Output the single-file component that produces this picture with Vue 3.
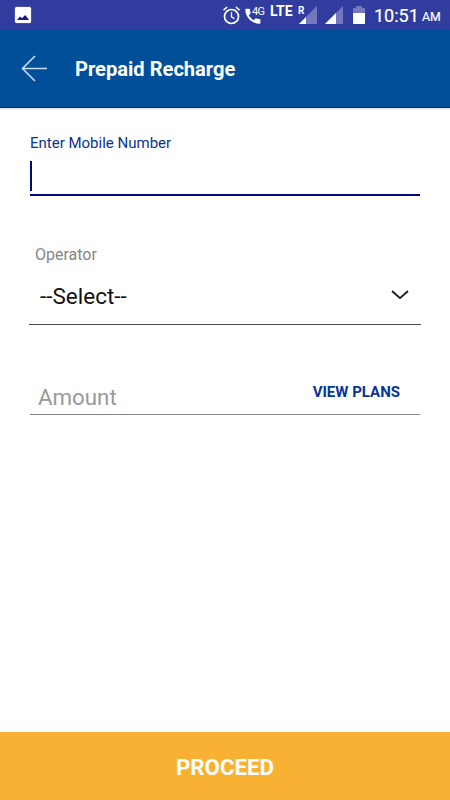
<script setup>
import { ref } from 'vue'

const operator = ref('--Select--')
const time = ref('10:51')
</script>

<template>
  <div class="screen">
    <div class="status">
      <svg class="photo" width="18" height="18" viewBox="0 0 18 18">
        <rect x="0.5" y="0.5" width="17" height="17" rx="2" fill="#fff" stroke="#17148b" stroke-width="0.6" />
        <path d="M3 14L6 10.4L8 12.3L11.2 9L15 14Z" fill="#17148b" />
      </svg>
      <div class="indicators">
        <svg class="alarm" width="18" height="19" viewBox="0 0 18 19" fill="none" stroke="#fff">
          <circle cx="8.5" cy="10.5" r="7" stroke-width="1.7" />
          <path d="M8.5 6.2V10.8L11.5 12.8" stroke-width="1.3" />
          <path d="M.5 4.1L4.2 1M16.5 4.1L12.8 1" stroke-width="1.6" />
        </svg>
        <div class="call">
          <svg width="16" height="16" viewBox="0 0 16 16">
            <path d="M1 .7H4.2C4.8 .7 5 1 5 1.5C5 2.7 5.2 3.8 5.6 4.8C5.7 5.1 5.6 5.4 5.4 5.7L3.8 7.2C5 9.3 6.7 11 8.8 12.2L10.4 10.6C10.7 10.3 11 10.3 11.3 10.4C12.3 10.7 13.4 10.9 14.6 10.9C15 10.9 15.4 11.2 15.4 11.7V15C15.4 15.4 15 15.8 14.6 15.8C6.9 15.8 .3 9.2 .3 1.5C.3 1 .6 .7 1 .7Z" fill="#fff" />
          </svg>
          <span class="generation">4G</span>
        </div>
        <span class="lte">LTE</span>
        <div class="signal roaming">
          <svg width="18" height="18" viewBox="0 0 18 18">
            <path d="M0 18L18 0V18Z" fill="#7477bd" />
            <path d="M0 18L7 11V18Z" fill="#fff" />
          </svg>
          <span class="roam">R</span>
        </div>
        <svg class="signal" width="18" height="18" viewBox="0 0 18 18">
          <path d="M0 18L18 0V18Z" fill="#7477bd" />
          <path d="M0 18L11 7V18Z" fill="#fff" />
        </svg>
        <svg class="battery" width="12" height="18" viewBox="0 0 12 18">
          <path d="M0 2H3V0H9V2H12V7H0Z" fill="#7477bd" />
          <path d="M0 7H12V17.2Q12 18 11.2 18H.8Q0 18 0 17.2Z" fill="#fff" />
        </svg>
        <span class="time">{{ time }}</span>
        <span class="meridiem">AM</span>
      </div>
    </div>

    <header class="bar">
      <svg width="28" height="28" viewBox="0 0 28 28" fill="none" stroke="#c9dcf0" stroke-width="1.6">
        <path d="M26 13.5H1.5M14 1L1.5 13.5L14 26" />
      </svg>
      <h1>Prepaid Recharge</h1>
    </header>

    <main class="form">
      <section class="mobile">
        <label>Enter Mobile Number</label>
        <div class="entry"><i class="caret"></i></div>
      </section>

      <section class="operator">
        <label>Operator</label>
        <div class="select">
          <span>{{ operator }}</span>
          <svg width="18" height="10" viewBox="0 0 18 10" fill="none" stroke="#111" stroke-width="1.7">
            <path d="M1 1L9 8.2L17 1" />
          </svg>
        </div>
      </section>

      <section class="amount">
        <span class="placeholder">Amount</span>
        <span class="plans">VIEW PLANS</span>
      </section>
    </main>

    <footer class="proceed">PROCEED</footer>
  </div>
</template>

<style>
body {
  margin: 0;
}
</style>

<style scoped>
.screen {
  width: 450px;
  height: 800px;
  display: flex;
  flex-direction: column;
  overflow: hidden;
  background: #fff;
  font-family: Roboto, sans-serif;
}
svg {
  display: block;
  flex: none;
}
.status {
  height: 30px;
  box-sizing: border-box;
  padding: 6px 9px 0 14px;
  display: flex;
  justify-content: space-between;
  background: #303c9e;
  color: #fff;
}
.indicators {
  width: 218px;
  display: flex;
  align-items: flex-start;
  white-space: nowrap;
}
.call {
  position: relative;
  width: 20px;
  margin-left: 4px;
  padding-top: 2px;
}
.generation {
  position: absolute;
  left: 7px;
  top: 0;
  font-size: 11px;
  line-height: 11px;
  letter-spacing: -0.7px;
}
.lte {
  width: 24px;
  margin-left: 5px;
  font-size: 14px;
  line-height: 11px;
  font-weight: 700;
}
.signal {
  margin-left: 8px;
}
.signal.roaming {
  position: relative;
  margin-left: 5px;
}
.roam {
  position: absolute;
  left: -1px;
  top: 0;
  font-size: 10px;
  line-height: 10px;
  font-weight: 700;
}
.battery {
  margin-left: 10px;
}
.time {
  width: 46px;
  margin-left: 9px;
  font-size: 18px;
  line-height: 20px;
  -webkit-text-stroke: 0.2px #fff;
}
.meridiem {
  margin-left: 2px;
  font-size: 12.3px;
  line-height: 23px;
  -webkit-text-stroke: 0.2px #fff;
}
.bar {
  height: 78px;
  box-sizing: border-box;
  padding: 0 20px 0 21px;
  display: flex;
  align-items: center;
  background: #004f98;
  border-bottom: 1px solid #0030a0;
  box-shadow: 0 1px 1px #ddd;
}
.bar h1 {
  margin: 0 0 0 26px;
  font-size: 20.1px;
  line-height: 24px;
  font-weight: 700;
  color: #fff;
}
.form {
  flex: 1;
  padding: 25px 29px 0;
}
.mobile {
  height: 63px;
  box-sizing: border-box;
  margin: 0 1px;
  border-bottom: 2px solid #00087f;
}
label {
  display: block;
}
.mobile label {
  font-size: 15px;
  line-height: 20px;
  color: #0b3391;
}
.entry {
  padding-top: 8px;
}
.caret {
  display: block;
  width: 2px;
  height: 30px;
  background: #00087f;
}
.operator {
  height: 129px;
  box-sizing: border-box;
  padding: 49px 12px 0 6px;
  border-bottom: 1px solid #4a4a4a;
}
.operator label {
  font-size: 16px;
  line-height: 20px;
  color: #858585;
}
.select {
  display: flex;
  justify-content: space-between;
  align-items: flex-start;
  padding: 17px 0 0 5px;
  font-size: 22.5px;
  line-height: 28px;
  color: #111;
}
.select svg {
  margin-top: 8px;
}
.amount {
  height: 90px;
  box-sizing: border-box;
  margin: 0 1px;
  padding: 58px 20px 0 8px;
  display: flex;
  justify-content: space-between;
  align-items: flex-start;
  border-bottom: 1px solid #858585;
}
.placeholder {
  font-size: 22.3px;
  line-height: 28px;
  color: #999;
}
.plans {
  font-size: 15px;
  line-height: 19px;
  font-weight: 700;
  color: #06349a;
}
.proceed {
  height: 68px;
  box-sizing: border-box;
  padding-top: 1px;
  display: flex;
  align-items: center;
  justify-content: center;
  background: #f8b133;
  color: #fff;
  font-size: 22.3px;
  font-weight: 700;
}
</style>
